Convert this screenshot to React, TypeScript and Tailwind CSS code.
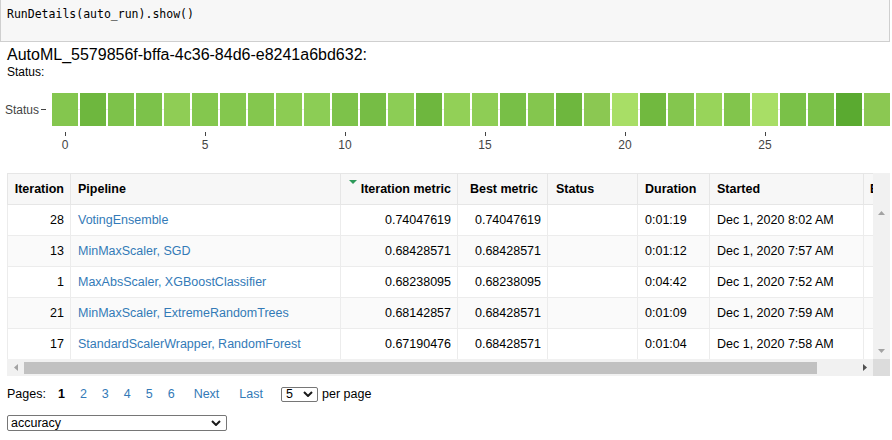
import React from "react";

const barColors = [
  "#84c64e", "#6eb73e", "#7dc24a", "#7cc24a", "#8fcd55", "#84c74e", "#84c74e", "#84c74e", "#8ccc53", "#8ccd55",
  "#7dc24a", "#76bd45", "#8ccd55", "#6eb73e", "#92d057", "#8ecd55", "#78bf47", "#84c64e", "#6eb73e", "#8bc852",
  "#a8de66", "#71b93f", "#84c64e", "#98d45a", "#82c54c", "#a8de66", "#7ac148", "#7ac148", "#5aaa30", "#8bc852",
];

const rows = [
  ["28", "VotingEnsemble", "0.74047619", "0.74047619", "0:01:19", "Dec 1, 2020 8:02 AM"],
  ["13", "MinMaxScaler, SGD", "0.68428571", "0.68428571", "0:01:12", "Dec 1, 2020 7:57 AM"],
  ["1", "MaxAbsScaler, XGBoostClassifier", "0.68238095", "0.68238095", "0:04:42", "Dec 1, 2020 7:52 AM"],
  ["21", "MinMaxScaler, ExtremeRandomTrees", "0.68142857", "0.68428571", "0:01:09", "Dec 1, 2020 7:59 AM"],
  ["17", "StandardScalerWrapper, RandomForest", "0.67190476", "0.68428571", "0:01:04", "Dec 1, 2020 7:58 AM"],
];

const Arrow = ({ dir, color }: { dir: "up" | "down" | "left" | "right"; color: string }) => {
  const pts = {
    up: "0,4 7,4 3.5,0",
    down: "0,0 7,0 3.5,4",
    left: "4,0 4,7 0,3.5",
    right: "0,0 0,7 4,3.5",
  }[dir];
  const vertical = dir === "up" || dir === "down";
  return (
    <svg width={vertical ? 7 : 4} height={vertical ? 4 : 7} viewBox={vertical ? "0 0 7 4" : "0 0 4 7"}>
      <polygon points={pts} fill={color} />
    </svg>
  );
};

const Chevron = () => (
  <svg width="10" height="6" viewBox="0 0 10 6">
    <polyline points="1,1 5,5 9,1" fill="none" stroke="#1a1a1a" strokeWidth="2" />
  </svg>
);

export default function App() {
  return (
    <div className="w-[892px] h-[440px] overflow-hidden bg-white font-['Liberation_Sans',Arial,sans-serif] text-black">
      {/* Code cell */}
      <div className="w-[890px] h-[42px] border border-t-0 border-[#cfcfcf] bg-[#f7f7f7] pl-[6px] pt-[6px] font-['DejaVu_Sans_Mono',monospace] text-[11.5px] leading-[17px] text-[#000]">
        RunDetails(auto_run).show()
      </div>

      {/* Title */}
      <div className="pl-[7px] mt-[4px] text-[16px] leading-[18px]">AutoML_5579856f-bffa-4c36-84d6-e8241a6bd632:</div>
      <div className="pl-[7px] text-[12px] leading-[14px] mt-[1px]">Status:</div>

      {/* Status chart */}
      <div className="mt-[14px] flex items-center">
        <div className="w-[52px] flex items-center justify-end pr-[6px] text-[12px] text-[#444]">
          Status
          <span className="ml-[2px] w-[5px] h-px bg-[#444]" />
        </div>
        <div className="flex gap-[2px] bg-[linear-gradient(to_bottom,transparent_16px,#ebebeb_16px,#ebebeb_17px,transparent_17px)]">
          {barColors.map((c, i) => (
            <div key={i} className="w-[26px] h-[33px] shrink-0" style={{ backgroundColor: c }} />
          ))}
        </div>
      </div>
      <div className="flex pl-[52px]">
        {barColors.map((_, i) => (
          <div key={i} className="w-[28px] shrink-0 pr-[2px]">
            {i % 5 === 0 && (
              <div className="flex flex-col items-center">
                <div className="w-px h-[4px] bg-[#444] mt-[6px]" />
                <div className="text-[12px] leading-[14px] text-[#444] mt-[2px]">{i}</div>
              </div>
            )}
          </div>
        ))}
      </div>

      {/* Table */}
      <div className="ml-[7px] mt-[21px] w-[883px] text-[12.5px]">
        <div className="flex">
          <div className="w-[866px] h-[186px] overflow-hidden">
            <div className="w-[1020px]">
              <div className="flex h-[32px] bg-[#f7f7f7] border-t border-b border-[#e6e6e6] font-bold">
                <div className="w-[64px] shrink-0 border-l border-r border-[#e6e6e6] flex items-center justify-end pr-[6px]">Iteration</div>
                <div className="w-[270px] shrink-0 border-r border-[#e6e6e6] flex items-center pl-[7px]">Pipeline</div>
                <div className="w-[117px] shrink-0 border-r border-[#e6e6e6] flex items-center justify-end pr-[6px]">
                  <span className="self-start mt-[6px] mr-[4px]">
                    <svg width="8" height="5" viewBox="0 0 8 5">
                      <polygon points="0,0 8,0 4,4" fill="#2d9a5a" />
                    </svg>
                  </span>
                  Iteration metric
                </div>
                <div className="w-[90px] shrink-0 border-r border-[#e6e6e6] flex items-center justify-end pr-[9px]">Best metric</div>
                <div className="w-[90px] shrink-0 border-r border-[#e6e6e6] flex items-center pl-[8px]">Status</div>
                <div className="w-[72px] shrink-0 border-r border-[#e6e6e6] flex items-center pl-[7px]">Duration</div>
                <div className="w-[154px] shrink-0 border-r border-[#e6e6e6] flex items-center pl-[7px]">Started</div>
                <div className="w-[150px] shrink-0 border-r border-[#e6e6e6] flex items-center pl-[6px]">Ended</div>
              </div>
              {rows.map((r, i) => (
                <div key={i} className={`flex h-[31px] border-b border-[#ececec] ${i % 2 === 1 ? "bg-[#fafafa]" : "bg-white"}`}>
                  <div className="w-[64px] shrink-0 border-l border-r border-[#ececec] flex items-center justify-end pr-[6px]">{r[0]}</div>
                  <div className="w-[270px] shrink-0 border-r border-[#ececec] flex items-center pl-[7px] text-[#337ab7]">{r[1]}</div>
                  <div className="w-[117px] shrink-0 border-r border-[#ececec] flex items-center justify-end pr-[6px]">{r[2]}</div>
                  <div className="w-[90px] shrink-0 border-r border-[#ececec] flex items-center justify-end pr-[6px]">{r[3]}</div>
                  <div className="w-[90px] shrink-0 border-r border-[#ececec]" />
                  <div className="w-[72px] shrink-0 border-r border-[#ececec] flex items-center pl-[7px]">{r[4]}</div>
                  <div className="w-[154px] shrink-0 border-r border-[#ececec] flex items-center pl-[7px]">{r[5]}</div>
                  <div className="w-[150px] shrink-0 border-r border-[#ececec]" />
                </div>
              ))}
            </div>
          </div>
          {/* vertical scrollbar */}
          <div className="w-[17px] h-[186px] bg-[#f1f1f1] flex flex-col">
            <div className="h-[31px]" />
            <div className="h-[17px] flex items-center justify-center">
              <Arrow dir="up" color="#a3a3a3" />
            </div>
            <div className="flex-1" />
            <div className="h-[17px] flex items-center justify-center">
              <Arrow dir="down" color="#a3a3a3" />
            </div>
          </div>
        </div>
        {/* horizontal scrollbar */}
        <div className="flex h-[17px]">
          <div className="w-[866px] bg-[#f1f1f1] flex items-center">
            <div className="w-[17px] h-[17px] flex items-center justify-center">
              <Arrow dir="left" color="#a3a3a3" />
            </div>
            <div className="flex-1 h-full flex items-center">
              <div className="w-[793px] h-[12px] bg-[#c1c1c1]" />
            </div>
            <div className="w-[17px] h-[17px] flex items-center justify-center">
              <Arrow dir="right" color="#505050" />
            </div>
          </div>
          <div className="w-[17px] bg-[#dcdcdc]" />
        </div>
      </div>

      {/* Pagination */}
      <div className="mt-[8px] pl-[7px] h-[20px] flex items-center text-[12.5px]">
        <span>Pages:</span>
        <span className="ml-[12px] font-bold">1</span>
        <span className="ml-[15px] text-[#337ab7]">2</span>
        <span className="ml-[15px] text-[#337ab7]">3</span>
        <span className="ml-[15px] text-[#337ab7]">4</span>
        <span className="ml-[15px] text-[#337ab7]">5</span>
        <span className="ml-[15px] text-[#337ab7]">6</span>
        <span className="ml-[19px] text-[#337ab7]">Next</span>
        <span className="ml-[20px] text-[#337ab7]">Last</span>
        <div className="ml-[18px] w-[37px] h-[15px] border border-[#767676] rounded-[2px] flex items-center justify-between pl-[4px] pr-[4px]">
          <span className="leading-[13px]">5</span>
          <Chevron />
        </div>
        <span className="ml-[4px]">per page</span>
      </div>

      {/* Metric select */}
      <div className="mt-[11px] ml-[7px] w-[220px] h-[16px] border border-[#767676] rounded-[2px] flex items-center justify-between pl-[3px] pr-[5px] text-[12.5px]">
        <span className="leading-[14px]">accuracy</span>
        <Chevron />
      </div>
    </div>
  );
}
